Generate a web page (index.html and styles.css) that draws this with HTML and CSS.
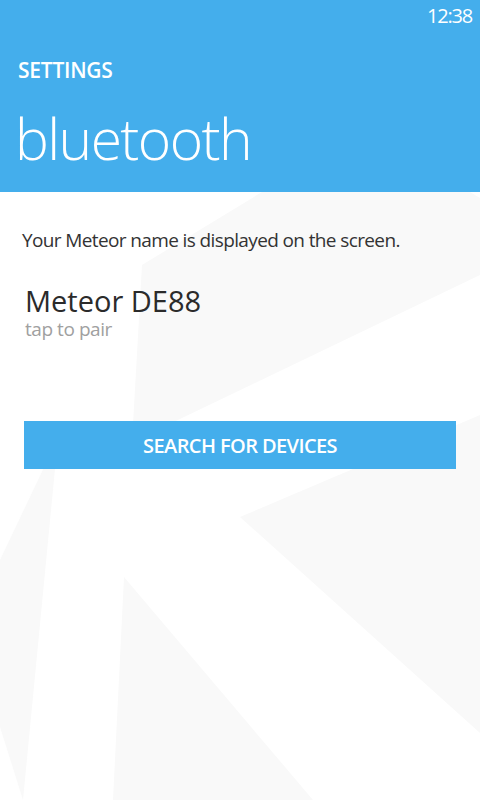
FILE: index.html
```html
<!DOCTYPE html>
<html lang="en">
<head>
<meta charset="utf-8">
<title>Settings - bluetooth</title>
<link rel="stylesheet" href="styles.css">
</head>
<body>
<div class="screen">
  <svg class="watermark" width="480" height="800" viewBox="0 0 480 800" aria-hidden="true">
    <polygon points="262,192 470,192 480,198 480,275 132,442 142,265"/>
    <polygon points="58,438 0,560 0,727 23,800"/>
    <polygon points="124,577 113,800 313,800"/>
    <polygon points="240,517 480,415 480,733"/>
  </svg>
  <header class="header">
    <div class="status"><span class="clock">12:38</span></div>
    <div class="section">SETTINGS</div>
    <h1 class="title">bluetooth</h1>
  </header>
  <main class="content">
    <p class="intro">Your Meteor name is displayed on the screen.</p>
    <div class="device">
      <div class="device-name">Meteor DE88</div>
      <div class="device-hint">tap to pair</div>
    </div>
    <button class="search" type="button">SEARCH FOR DEVICES</button>
  </main>
</div>
</body>
</html>
```

FILE: styles.css
```css
* { box-sizing: border-box; }
html, body {
  margin: 0;
  padding: 0;
  background: #ffffff;
}
body {
  font-family: "Open Sans", "Noto Sans", sans-serif;
}
.screen {
  position: relative;
  width: 480px;
  height: 800px;
  overflow: hidden;
  background: #ffffff;
}
.watermark {
  position: absolute;
  left: 0;
  top: 0;
  fill: #f9f9f9;
  z-index: 0;
}
.header {
  position: relative;
  z-index: 1;
  height: 192px;
  background: #44aeec;
  color: #ffffff;
  display: flex;
  flex-direction: column;
}
.status {
  height: 32px;
  display: flex;
  justify-content: flex-end;
  padding-right: 8px;
}
.clock {
  font-size: 20px;
  line-height: 32px;
  font-weight: 400;
  letter-spacing: -1.2px;
}
.section {
  margin-top: 24px;
  padding-left: 18px;
  font-size: 21px;
  line-height: 28px;
  font-weight: 600;
  letter-spacing: -0.25px;
}
.title {
  margin: 22px 0 0 0;
  padding-left: 15px;
  font-size: 57px;
  line-height: 64px;
  font-weight: 300;
  letter-spacing: -1.6px;
}
.content {
  position: relative;
  z-index: 1;
  padding: 35px 24px 0 24px;
  display: flex;
  flex-direction: column;
}
.intro {
  margin: 0 0 0 -2px;
  font-size: 19px;
  line-height: 26px;
  color: #333333;
  letter-spacing: -0.62px;
}
.device {
  margin-top: 32px;
  padding-left: 1px;
}
.device-name {
  font-size: 29px;
  line-height: 32px;
  color: #2b2b2b;
}
.device-hint {
  margin-top: 2px;
  font-size: 19px;
  line-height: 20px;
  color: #a0a0a0;
  letter-spacing: -0.45px;
}
.search {
  margin-top: 82px;
  height: 48px;
  width: 100%;
  border: 0;
  background: #44aeec;
  color: #ffffff;
  font-family: inherit;
  font-size: 20px;
  font-weight: 600;
  letter-spacing: -0.6px;
  padding: 0;
  display: flex;
  align-items: center;
  justify-content: center;
}
```
